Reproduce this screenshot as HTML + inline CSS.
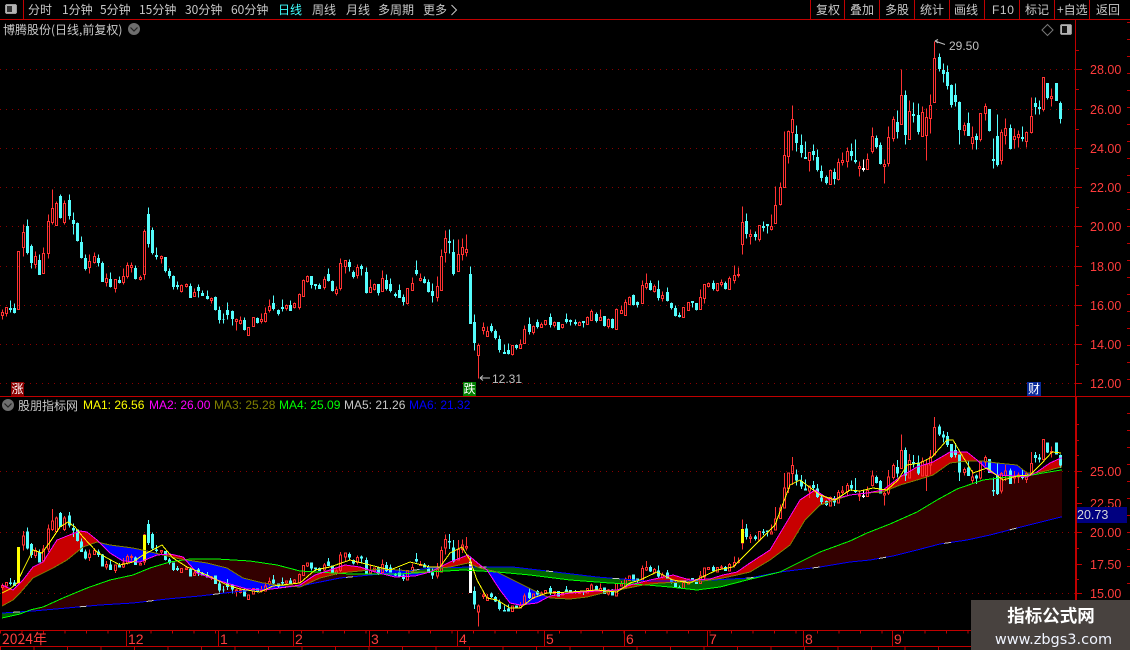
<!DOCTYPE html>
<html><head><meta charset="utf-8"><title>博腾股份</title>
<style>
html,body{margin:0;padding:0;background:#000;width:1130px;height:650px;overflow:hidden}
svg{position:absolute;left:0;top:0;display:block}
text{font-family:"Liberation Sans","WenQuanYi Zen Hei",sans-serif;font-size:12px}
.c{font-family:"WenQuanYi Zen Hei","Noto Sans CJK SC",sans-serif;fill:#c8c8c8}
.p{fill:#ff3c3c;font-size:12.5px}
.v{vector-effect:non-scaling-stroke}
</style></head><body>
<svg width="1130" height="650" viewBox="0 0 1130 650" shape-rendering="crispEdges">
<defs>
<g id="candles">
<path class="v" fill="none" stroke="#ff3232" d="M2 309V312M2 315V319M1 312h2V315h-2zM6 313V316M5 307h2V313h-2zM17 251h2V309h-2zM23 224V232M23 247V256M22 232h2V247h-2zM35 251V256M35 264V268M34 256h2V264h-2zM43 247V253M42 253h2V273h-2zM48 214V221M48 253V258M47 221h2V253h-2zM52 189V208M52 222V224M51 208h2V222h-2zM56 201V203M55 203h2V225h-2zM64 200V203M64 222V224M63 203h2V222h-2zM89 254V261M89 267V273M88 261h2V267h-2zM94 252V256M94 262V263M93 256h2V262h-2zM106 273V278M106 282V286M105 278h2V282h-2zM115 288V292M114 279h2V288h-2zM123 268V276M123 282V284M122 276h2V282h-2zM127 262V265M127 276V278M126 265h2V276h-2zM131 262V265M131 267V272M130 265h2V267h-2zM140 275V277M140 279V280M139 277h2V279h-2zM144 229V231M144 274V279M143 231h2V274h-2zM161 255V256M161 258V263M160 256h2V258h-2zM181 284V285M181 291V292M180 285h2V291h-2zM186 283V284M186 286V287M185 284h2V286h-2zM194 288V292M193 292h2V296h-2zM211 297V298M211 300V303M210 298h2V300h-2zM236 318V319M236 321V330M235 319h2V321h-2zM240 316V320M240 323V324M239 320h2V323h-2zM247 327h2V335h-2zM252 317h2V326h-2zM261 313V319M261 321V323M260 319h2V321h-2zM265 307V313M265 321V322M264 313h2V321h-2zM269 299V306M269 310V312M268 306h2V310h-2zM286 304V305M286 308V310M285 305h2V308h-2zM294 302V303M294 307V308M293 303h2V307h-2zM299 293V294M299 307V309M298 294h2V307h-2zM303 279V280M302 280h2V296h-2zM307 275V276M307 281V282M306 276h2V281h-2zM324 276V279M324 287V289M323 279h2V287h-2zM336 286V289M336 293V295M335 289h2V293h-2zM340 258V263M340 288V290M339 263h2V288h-2zM345 266V273M344 260h2V266h-2zM357 264V267M357 275V278M356 267h2V275h-2zM370 279V287M369 287h2V292h-2zM374 283V284M374 289V290M373 284h2V289h-2zM382 270V278M381 278h2V291h-2zM407 303V304M406 288h2V303h-2zM412 277V283M411 283h2V290h-2zM420 273V278M420 280V281M419 278h2V280h-2zM437 276V286M437 297V301M436 286h2V297h-2zM441 249V256M440 256h2V290h-2zM445 230V238M445 252V262M444 238h2V252h-2zM458 239V254M457 254h2V271h-2zM462 238V247M462 254V260M461 247h2V254h-2zM466 234V249M466 252V256M465 249h2V252h-2zM478 343V345M478 355V378M477 345h2V355h-2zM483 322V327M483 330V334M482 327h2V330h-2zM487 326V331M486 331h2V336h-2zM512 354V355M511 345h2V354h-2zM520 339V344M519 344h2V348h-2zM524 325V329M523 329h2V343h-2zM533 325V326M533 332V334M532 326h2V332h-2zM541 322V324M540 324h2V327h-2zM545 324V325M544 320h2V324h-2zM554 321V322M554 325V327M553 322h2V325h-2zM562 327V328M561 324h2V327h-2zM579 321V322M578 322h2V325h-2zM587 316V317M586 317h2V324h-2zM591 309V311M590 311h2V320h-2zM600 309V317M599 317h2V320h-2zM608 318V319M608 326V328M607 319h2V326h-2zM616 308V309M615 309h2V329h-2zM621 305V310M620 310h2V313h-2zM625 299V302M624 302h2V315h-2zM629 296V297M628 297h2V304h-2zM642 280V285M641 285h2V303h-2zM646 273V283M646 287V289M645 283h2V287h-2zM654 284V286M654 291V292M653 286h2V291h-2zM662 291V295M662 298V301M661 295h2V298h-2zM682 307h2V317h-2zM687 302h2V310h-2zM700 289V297M699 297h2V309h-2zM704 298V303M703 284h2V298h-2zM708 282V283M708 286V287M707 283h2V286h-2zM717 290V291M716 283h2V290h-2zM721 279V282M721 284V286M720 282h2V284h-2zM729 276V278M728 278h2V289h-2zM734 265V275M734 280V283M733 275h2V280h-2zM738 267V274M738 275V277M737 274h2V275h-2zM742 206V222M742 244V254M741 222h2V244h-2zM750 229V234M750 236V244M749 234h2V236h-2zM759 239V241M758 225h2V239h-2zM771 214V226M771 229V230M770 226h2V229h-2zM775 186V205M774 205h2V223h-2zM780 182V187M780 204V205M779 187h2V204h-2zM784 131V155M783 155h2V187h-2zM788 130V131M788 156V163M787 131h2V156h-2zM792 105V119M792 132V150M791 119h2V132h-2zM809 160V171M808 152h2V160h-2zM830 169V170M829 170h2V184h-2zM838 158V162M838 179V180M837 162h2V179h-2zM842 152V160M842 162V165M841 160h2V162h-2zM847 147V151M847 161V167M846 151h2V161h-2zM859 161V166M859 168V176M858 166h2V168h-2zM867 153V159M866 159h2V169h-2zM872 127V136M872 151V153M871 136h2V151h-2zM884 159V164M884 166V183M883 164h2V166h-2zM888 126V137M888 163V166M887 137h2V163h-2zM893 116V119M893 138V141M892 119h2V138h-2zM901 69V95M900 95h2V124h-2zM909 100V111M908 111h2V139h-2zM922 106V112M921 112h2V136h-2zM926 108V117M926 135V160M925 117h2V135h-2zM930 94V105M930 118V133M929 105h2V118h-2zM934 41V58M933 58h2V102h-2zM964 122V125M964 130V135M963 125h2V130h-2zM972 126V137M972 143V149M971 137h2V143h-2zM980 139V141M979 113h2V139h-2zM985 103V106M985 113V120M984 106h2V113h-2zM1001 129V132M1001 160V164M1000 132h2V160h-2zM1005 118V128M1005 135V144M1004 128h2V135h-2zM1014 128V136M1014 139V148M1013 136h2V139h-2zM1018 130V134M1018 137V147M1017 134h2V137h-2zM1026 131V132M1026 141V147M1025 132h2V141h-2zM1031 97V116M1031 132V133M1030 116h2V132h-2zM1043 109V111M1042 77h2V109h-2zM1051 88V96M1051 98V106M1050 96h2V98h-2z"/>
<path class="v" fill="#54fcfc" stroke="#54fcfc" d="M10 300V312M9 308h2V309h-2zM14 303V313M13 308h2V312h-2zM27 219V254M26 226h2V252h-2zM31 244V268M30 246h2V262h-2zM39 254V274M38 260h2V274h-2zM60 194V218M59 196h2V217h-2zM69 194V219M68 200h2V215h-2zM73 212V234M72 220h2V223h-2zM77 222V241M76 223h2V240h-2zM81 236V258M80 242h2V257h-2zM85 254V270M84 258h2V268h-2zM98 254V266M97 258h2V262h-2zM102 261V281M101 263h2V281h-2zM110 272V287M109 279h2V286h-2zM119 276V283M118 280h2V282h-2zM135 265V279M134 268h2V278h-2zM148 207V247M147 214h2V243h-2zM152 227V254M151 230h2V252h-2zM156 247V259M155 255h2V256h-2zM165 257V272M164 257h2V270h-2zM169 268V278M168 271h2V275h-2zM173 275V289M172 276h2V286h-2zM177 281V289M176 285h2V286h-2zM190 283V297M189 286h2V297h-2zM198 284V297M197 287h2V290h-2zM202 290V295M201 293h2V295h-2zM207 290V299M206 296h2V298h-2zM215 296V310M214 297h2V309h-2zM219 306V323M218 310h2V319h-2zM223 313V323M222 319h2V319h-2zM227 302V319M226 310h2V314h-2zM232 310V325M231 311h2V318h-2zM244 317V330M243 320h2V329h-2zM257 317V323M256 318h2V322h-2zM273 295V310M272 303h2V308h-2zM278 309V315M277 310h2V313h-2zM282 299V311M281 307h2V308h-2zM290 300V310M289 305h2V310h-2zM311 276V288M310 276h2V284h-2zM315 284V289M314 284h2V285h-2zM319 283V288M318 285h2V288h-2zM328 268V281M327 274h2V280h-2zM332 280V291M331 281h2V290h-2zM349 259V271M348 262h2V266h-2zM353 270V278M352 272h2V276h-2zM361 264V275M360 266h2V268h-2zM366 267V293M365 272h2V292h-2zM378 284V295M377 284h2V292h-2zM386 274V290M385 280h2V288h-2zM390 278V292M389 284h2V290h-2zM395 292V297M394 294h2V295h-2zM399 284V297M398 290h2V297h-2zM403 294V305M402 297h2V301h-2zM416 260V275M415 270h2V273h-2zM424 276V283M423 279h2V282h-2zM428 279V292M427 282h2V291h-2zM432 283V302M431 291h2V295h-2zM449 229V253M448 241h2V242h-2zM453 239V275M452 252h2V273h-2zM470 266V323M469 274h2V323h-2zM474 314V350M473 322h2V342h-2zM491 323V332M490 326h2V330h-2zM495 329V339M494 331h2V337h-2zM499 335V352M498 339h2V349h-2zM504 344V353M503 352h2V353h-2zM508 343V354M507 350h2V353h-2zM516 344V349M515 345h2V347h-2zM529 317V334M528 324h2V331h-2zM537 319V328M536 322h2V326h-2zM550 313V327M549 317h2V324h-2zM558 322V329M557 322h2V329h-2zM566 313V323M565 319h2V321h-2zM570 319V325M569 320h2V321h-2zM575 319V325M574 322h2V323h-2zM583 321V327M582 321h2V322h-2zM596 312V322M595 314h2V320h-2zM604 316V326M603 316h2V325h-2zM612 318V328M611 319h2V327h-2zM633 294V305M632 295h2V304h-2zM637 301V307M636 302h2V304h-2zM650 280V290M649 283h2V289h-2zM658 280V300M657 289h2V297h-2zM667 287V301M666 292h2V300h-2zM671 302V309M670 303h2V307h-2zM675 305V316M674 308h2V315h-2zM679 312V317M678 315h2V316h-2zM692 301V307M691 301h2V302h-2zM696 303V310M695 303h2V309h-2zM713 280V290M712 283h2V288h-2zM725 281V289M724 283h2V288h-2zM746 213V238M745 221h2V233h-2zM755 231V240M754 234h2V236h-2zM763 221V231M762 226h2V227h-2zM767 224V233M766 224h2V225h-2zM796 125V151M795 134h2V142h-2zM801 134V157M800 145h2V152h-2zM805 141V158M804 157h2V158h-2zM813 144V160M812 151h2V154h-2zM817 149V171M816 157h2V169h-2zM821 165V181M820 171h2V177h-2zM826 175V184M825 177h2V182h-2zM834 168V184M833 172h2V178h-2zM851 143V160M850 151h2V155h-2zM855 139V163M854 160h2V161h-2zM876 135V148M875 138h2V146h-2zM880 142V164M879 145h2V163h-2zM897 110V138M896 122h2V131h-2zM905 90V144M904 95h2V134h-2zM913 102V122M912 114h2V115h-2zM918 103V134M917 115h2V131h-2zM939 53V71M938 57h2V68h-2zM943 63V82M942 70h2V73h-2zM947 65V89M946 72h2V85h-2zM951 84V107M950 85h2V104h-2zM955 83V106M954 95h2V101h-2zM959 101V144M958 102h2V129h-2zM968 112V135M967 123h2V135h-2zM976 133V149M975 136h2V139h-2zM989 109V131M988 109h2V130h-2zM993 138V168M992 159h2V160h-2zM997 114V166M996 136h2V164h-2zM1010 124V149M1009 128h2V148h-2zM1022 126V141M1021 137h2V138h-2zM1035 97V114M1034 103h2V106h-2zM1039 100V114M1038 107h2V108h-2zM1047 83V99M1046 83h2V97h-2zM1056 83V100M1055 83h2V100h-2zM1060 101V123M1059 103h2V118h-2z"/>
<path class="v" fill="none" stroke="#fff" d="M863 159V171M862 168h2V169h-2z"/>
</g>
<path id="aM" d="M-9 300V585H2L13 590 23 580 33 567 43 562 57 540 67 536 80 531 87 532 97 540 110 553 123 561 140 562 157 555 170 554 183 557 197 573 217 580 233 585 247 589 263 590 280 588 300 585 315 575 330 570 345 565 360 567 375 572 395 577 415 576 430 572 440 567 450 562 468 555 480 565 487 570 500 590 510 603 520 605 537 603 550 596 570 593 597 591 617 590 630 585 650 580 673 575 690 580 710 579 723 575 737 572 750 563 770 550 785 525 800 500 815 490 830 500 850 495 867 493 883 490 900 477 917 467 933 462 950 452 967 452 977 460 990 472 997 475 1017 476 1027 477 1037 472 1050 463 1061 458H1099V300Z"/>
<path id="aO" d="M-9 300V606H2L13 600 20 593 33 578 53 568 67 560 83 547 97 542 110 545 133 548 147 551 163 555 180 559 207 563 227 568 243 578 263 583 277 585 300 587 320 578 340 573 360 571 380 569 400 570 415 572 430 572 440 568 450 567 468 563 480 568 497 572 517 582 537 592 550 598 570 599 587 597 603 593 623 589 643 585 660 583 683 582 703 581 723 578 737 575 750 572 770 560 790 545 805 520 820 505 835 500 850 495 867 493 883 492 900 485 917 480 933 475 950 463 967 461 983 461 997 463 1017 465 1027 473 1037 473 1050 470 1061 467H1099V300Z"/>
<path id="aG" d="M-9 300V618H2L20 614 30 610 43 607 63 598 87 588 110 580 133 575 150 568 170 562 190 559 217 559 250 561 277 565 300 571 350 574 400 574 430 572 463 570 497 572 530 575 570 580 610 583 647 585 670 587 697 590 720 587 747 580 780 572 820 552 850 541 867 533 890 524 917 512 937 500 957 489 983 480 1007 477 1027 476 1043 473 1061 470H1099V300Z"/>
<path id="aB" d="M-9 300V613H2L33 611 67 608 100 605 133 603 167 599 200 596 233 592 267 589 300 586 340 578 400 572 430 568 473 567 513 567 547 571 597 577 647 581 697 581 730 579 750 578 780 572 820 567 850 562 870 560 893 556 917 550 940 544 967 540 990 535 1017 528 1037 523 1061 517H1099V300Z"/>
<mask id="mM" maskUnits="userSpaceOnUse" x="0" y="0" width="1130" height="650"><rect width="1130" height="650" fill="#fff"/><use href="#aM" fill="#000"/></mask>
<mask id="mO" maskUnits="userSpaceOnUse" x="0" y="0" width="1130" height="650"><rect width="1130" height="650" fill="#fff"/><use href="#aO" fill="#000"/></mask>
<mask id="mG" maskUnits="userSpaceOnUse" x="0" y="0" width="1130" height="650"><rect width="1130" height="650" fill="#fff"/><use href="#aG" fill="#000"/></mask>
<mask id="mB" maskUnits="userSpaceOnUse" x="0" y="0" width="1130" height="650"><rect width="1130" height="650" fill="#fff"/><use href="#aB" fill="#000"/></mask>
<clipPath id="cp"><rect x="2" y="401" width="1060" height="229"/></clipPath>
</defs>
<rect width="1130" height="650" fill="#000"/>

<!-- grids -->
<g stroke="#8a0000" stroke-dasharray="1 5" fill="none">
<path d="M0 69.5H1075M0 109.5H1075M0 148.5H1075M0 187.5H1075M0 226.5H1075M0 266.5H1075M0 305.5H1075M0 344.5H1075M0 383.5H1075"/>
<path d="M0 471.5H1075M0 532.5H1075M0 593.5H1075"/>
</g>

<!-- top candles -->
<use href="#candles" transform="translate(.5 .5)"/>

<!-- lower fills -->
<g clip-path="url(#cp)">
<use href="#aB" fill="#330000" mask="url(#mG)"/>
<use href="#aG" fill="#006400" mask="url(#mB)"/>
<use href="#aO" fill="#c80000" mask="url(#mM)"/>
<use href="#aM" fill="#0000ff" mask="url(#mO)"/>
</g>

<!-- lower candles -->
<use href="#candles" transform="translate(.5 391.7) scale(1 .621)"/>
<path fill="#ffff00" d="M17 547h3v36h-3zM143 535h3v26h-3zM741 529h3v14h-3z"/>
<path fill="#fff" d="M469 562h3v31h-3z"/>

<!-- lower lines -->
<g clip-path="url(#cp)" fill="none">
<use href="#aB" stroke="#0000ff" stroke-width="1"/>
<use href="#aB" stroke="#c8c8c8" stroke-width="1" stroke-dasharray="7 60"/>
<use href="#aG" stroke="#00ff00" stroke-width="1"/>
<use href="#aO" stroke="#808000" stroke-width="1"/>
<use href="#aM" stroke="#ff00ff" stroke-width="1"/>
<path stroke="#ffff00" stroke-width="1" d="M2 593L10 589 17 583 23 570 33 550 42 553 50 542 60 527 68 522 75 527 83 537 97 552 107 558 120 565 133 562 143 555 162 545 173 558 187 567 207 575 227 585 240 589 260 592 273 586 300 583 315 570 330 567 350 560 370 565 390 570 410 562 430 567 440 567 450 553 462 547 470 560 477 580 487 598 497 600 510 608 520 608 533 598 547 593 570 592 597 590 617 592 630 583 640 580 657 572 673 580 690 583 700 578 717 570 733 567 750 550 765 535 775 525 790 485 800 480 820 495 835 500 850 490 860 491 873 488 887 490 898 480 907 465 920 463 932 457 947 440 953 440 963 457 973 473 987 468 1003 480 1017 476 1030 475 1042 463 1052 452 1061 453"/>
</g>

<!-- frame lines -->
<g stroke="#c00000" fill="none">
<path d="M0 19.5H1130M23.5 0V19M810.5 0V19M844.5 0V19M879.5 0V19M914.5 0V19M949.5 0V19M984.5 0V19M1019.5 0V19M1054.5 0V19M1089.5 0V19"/>
<path d="M0 396.5H1130M1075.5 19V630"/>
<path d="M1076.5 397V630"/>
<path d="M0 630.5H1076M0 646.5H971"/>
<path d="M126.5 630V646M218.5 630V646M293.5 630V646M369.5 630V646M457.5 630V646M544.5 630V646M624.5 630V646M707.5 630V646M803.5 630V646M892.5 630V646"/>
<path stroke-width="3" stroke-dasharray="1 20.5" d="M0 632H971"/>
<path stroke-width="4" stroke-dasharray="1 32.5" d="M0 648H971"/>
<path d="M1076 69.5H1082M1076 109.5H1082M1076 148.5H1082M1076 187.5H1082M1076 226.5H1082M1076 266.5H1082M1076 305.5H1082M1076 344.5H1082M1076 383.5H1082M1076 89.5H1079M1076 129.5H1079M1076 168.5H1079M1076 207.5H1079M1076 246.5H1079M1076 285.5H1079M1076 325.5H1079M1076 364.5H1079M1076 50.5H1079"/>
<path d="M1076 471.5H1082M1076 503.5H1082M1076 532.5H1082M1076 564.5H1082M1076 593.5H1082M1076 424.5H1079M1076 440.5H1079M1076 455.5H1079M1076 487.5H1079M1076 548.5H1079M1076 579.5H1079"/>
<path stroke-width="3" stroke-dasharray="1 16" d="M1128.5 22V600"/>
</g>

<!-- toolbar icons -->
<rect x="5.5" y="4.5" width="11" height="9" rx="1.5" fill="#b4b4b4" stroke="#9a9a9a"/>
<rect x="7" y="6" width="5" height="6" fill="#333"/>
<rect x="1060.5" y="24.5" width="11" height="10" rx="1.5" fill="#b4b4b4" stroke="#8c8c8c"/>
<rect x="1062" y="26" width="5" height="7" fill="#111"/>
<path d="M1047.5 24.5L1053 30 1047.5 35.5 1042 30Z" fill="none" stroke="#777" shape-rendering="auto"/>
<g shape-rendering="auto">
<circle cx="134" cy="29" r="6" fill="#6e6e6e"/><path d="M130.5 27.5L134 31 137.5 27.5" fill="none" stroke="#222" stroke-width="1.2"/>
<circle cx="8" cy="405" r="6" fill="#6e6e6e"/><path d="M4.5 403.5L8 407 11.5 403.5" fill="none" stroke="#222" stroke-width="1.2"/>
<path d="M451.5 5L456.5 10 451.5 15" fill="none" stroke="#c8c8c8"/>
<path d="M935 41L945 44.5M935 41l3 -1.5M935 41l3 2" fill="none" stroke="#c0c0c0"/>
<path d="M480 378H490M480 378l3 -2.5M480 378l3 2.5" fill="none" stroke="#c0c0c0"/>
</g>

<!-- toolbar text -->
<g class="c">
<text class="c" x="28" y="14">分时</text>
<text class="c" x="62" y="14">1分钟</text>
<text class="c" x="100" y="14">5分钟</text>
<text class="c" x="139" y="14">15分钟</text>
<text class="c" x="185" y="14">30分钟</text>
<text class="c" x="231" y="14">60分钟</text>
<text class="c" x="278" y="14" style="fill:#40ffff">日线</text>
<text class="c" x="312" y="14">周线</text>
<text class="c" x="346" y="14">月线</text>
<text class="c" x="378" y="14">多周期</text>
<text class="c" x="423" y="14">更多</text>
<text class="c" x="816" y="14">复权</text>
<text class="c" x="850" y="14">叠加</text>
<text class="c" x="885" y="14">多股</text>
<text class="c" x="920" y="14">统计</text>
<text class="c" x="954" y="14">画线</text>
<text x="992" y="14" fill="#c8c8c8" letter-spacing=".6">F10</text>
<text class="c" x="1025" y="14">标记</text>
<text class="c" x="1057" y="14">+自选</text>
<text class="c" x="1096" y="14">返回</text>
<text class="c" x="3" y="34">博腾股份(日线,前复权)</text>
<text class="c" x="18" y="410">股朋指标网</text>
</g>

<!-- MA legend -->
<text x="83" y="409" fill="#ffff00">MA1: 26.56</text>
<text x="149" y="409" fill="#ff00ff">MA2: 26.00</text>
<text x="214" y="409" fill="#808000">MA3: 25.28</text>
<text x="279" y="409" fill="#00ff00">MA4: 25.09</text>
<text x="344" y="409" fill="#c8c8c8">MA5: 21.26</text>
<text x="409" y="409" fill="#0000ff">MA6: 21.32</text>

<!-- annotations -->
<text x="949" y="50" fill="#c0c0c0">29.50</text>
<text x="492" y="383" fill="#c0c0c0">12.31</text>

<!-- price labels -->
<text class="p" x="1090" y="74">28.00</text>
<text class="p" x="1090" y="114">26.00</text>
<text class="p" x="1090" y="153">24.00</text>
<text class="p" x="1090" y="192">22.00</text>
<text class="p" x="1090" y="231">20.00</text>
<text class="p" x="1090" y="271">18.00</text>
<text class="p" x="1090" y="310">16.00</text>
<text class="p" x="1090" y="349">14.00</text>
<text class="p" x="1090" y="388">12.00</text>
<text class="p" x="1090" y="476">25.00</text>
<text class="p" x="1090" y="508">22.50</text>
<text class="p" x="1090" y="537">20.00</text>
<text class="p" x="1090" y="569">17.50</text>
<text class="p" x="1090" y="598">15.00</text>
<rect x="1077" y="507" width="50" height="16" fill="#000080"/>
<text x="1077" y="519" fill="#d8d8d8" style="font-size:12.5px">20.73</text>

<!-- event tags -->
<rect x="11" y="382" width="13" height="14" fill="#8b0000"/>
<text x="11.5" y="393" class="c" style="fill:#fff">涨</text>
<rect x="463" y="382" width="13" height="14" fill="#008000"/>
<text x="463.5" y="393" class="c" style="fill:#fff">跌</text>
<rect x="1027" y="382" width="14" height="14" fill="#0a2a9a"/>
<text x="1028" y="393" class="c" style="fill:#fff">财</text>

<!-- time labels -->
<g fill="#ff3c3c">
<text x="2" y="644" class="c" style="fill:#ff3c3c;font-size:14px">2024年</text>
<text x="128" y="644" style="font-size:14px">12</text>
<text x="220" y="644" style="font-size:14px">1</text>
<text x="295" y="644" style="font-size:14px">2</text>
<text x="371" y="644" style="font-size:14px">3</text>
<text x="459" y="644" style="font-size:14px">4</text>
<text x="546" y="644" style="font-size:14px">5</text>
<text x="626" y="644" style="font-size:14px">6</text>
<text x="709" y="644" style="font-size:14px">7</text>
<text x="805" y="644" style="font-size:14px">8</text>
<text x="894" y="644" style="font-size:14px">9</text>
</g>

<!-- watermark -->
<rect x="971" y="600" width="159" height="50" fill="#48423f"/>
<text x="1051" y="622" text-anchor="middle" style='font-family:"Noto Sans CJK SC","WenQuanYi Zen Hei",sans-serif;font-size:17.5px;font-weight:700;fill:#fff'>指标公式网</text>
<text x="1053.5" y="644" text-anchor="middle" style='font-family:"DejaVu Sans",sans-serif;font-size:14.5px;fill:#f0f4ff'>www.zbgs3.com</text>
</svg>
</body></html>
